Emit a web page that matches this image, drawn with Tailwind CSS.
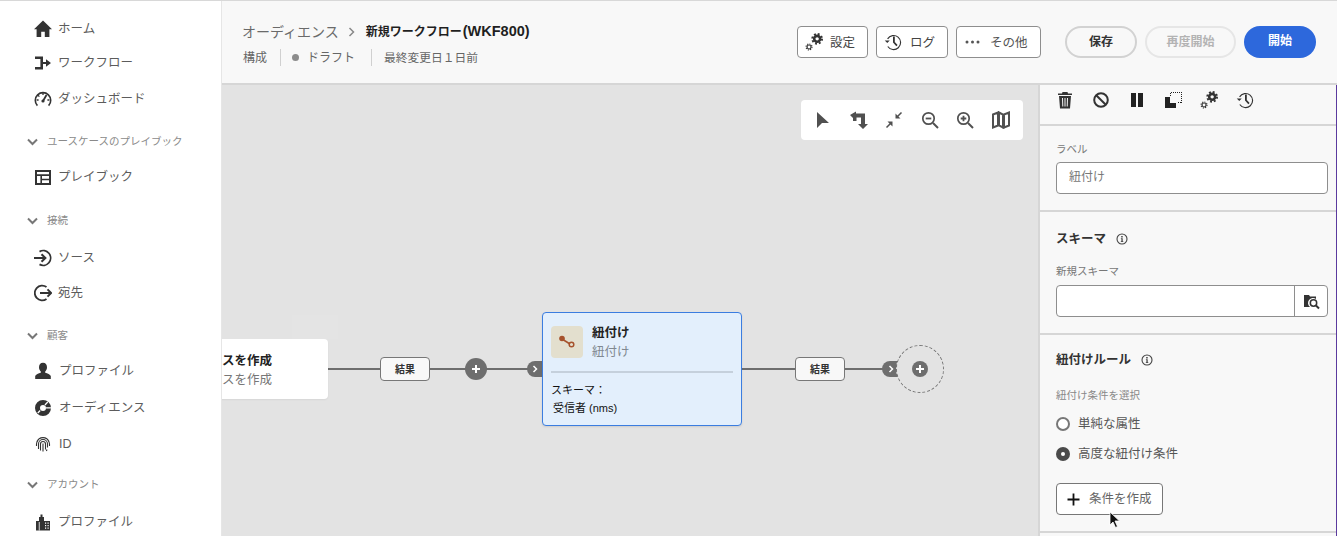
<!DOCTYPE html>
<html lang="ja">
  <head>
    <meta charset="UTF-8" />
    <title>新規ワークフロー</title>
    <script src="https://cdn.jsdelivr.net/npm/@tailwindcss/browser@4"></script>
  </head>
  <body class="h-[536px] w-[1337px] overflow-hidden bg-white font-['Liberation_Sans','Noto_Sans_CJK_JP',sans-serif] text-[#505050]">
    <!-- shared icons -->
    <svg class="hidden">
      <symbol id="gears" viewBox="0 0 20 20">
        <circle cx="13.500" cy="6.500" r="3.300" fill="none" stroke="#333" stroke-width="2.800" />
        <circle cx="13.500" cy="6.500" r="5.400" fill="none" stroke="#333" stroke-width="2.200" stroke-dasharray="2.120 2.120" />
        <circle cx="4.500" cy="15.500" r="2.200" fill="none" stroke="#333" stroke-width="1.200" />
        <circle cx="4.500" cy="15.500" r="3.300" fill="none" stroke="#333" stroke-width="1.200" stroke-dasharray="1.300 1.290" />
      </symbol>
      <symbol id="history" viewBox="0 0 20 20">
        <path d="M4 6.500A7.800 7.800 0 1 1 4.200 15" fill="none" stroke="#333" stroke-width="1.300" />
        <path d="M.8 8.200h5.600L3.600 11z" fill="#333" />
        <path d="M11 4v6.300l3.400 3.700" fill="none" stroke="#333" stroke-width="2" />
      </symbol>
      <symbol id="info" viewBox="0 0 12 12">
        <circle cx="6" cy="6" r="5" fill="none" stroke="#444" stroke-width="1.100" />
        <path d="M5.200 3h1.500v1.400H5.200zM4.900 5.200h1.800v3h.6v.9H4.800v-.9h.6V6.100h-.5z" fill="#444" />
      </symbol>
    </svg>

    <div class="flex h-full border-t border-[#d8d8d8]">
      <!-- sidebar -->
      <nav class="w-[222px] shrink-0 border-r border-[#e6e6e6] bg-white pt-[11px] text-[12.5px] text-[#5c5c5c]">
        <a class="flex h-[34px] items-center gap-[6px] pl-[34px]">
          <svg class="h-[18px] w-[18px]" viewBox="0 0 18 18"><path d="M9 .5 0 9.300h2.600V17h4.600v-5.200h3.600V17h4.600V9.300H18z" fill="#333" /></svg>
          <span>ホーム</span>
        </a>
        <a class="flex h-[34px] items-center gap-[6px] pl-[34px]">
          <svg class="h-[18px] w-[18px]" viewBox="0 0 18 18"><path d="M1 2.500h8V8h3V5.200L17 9l-5 3.800V10H9v5.500H1v-2.600h5.400V5.100H1z" fill="#333" /></svg>
          <span>ワークフロー</span>
        </a>
        <a class="mt-[2px] flex h-[34px] items-center gap-[6px] pl-[34px]">
          <svg class="h-[18px] w-[18px]" viewBox="0 0 18 18" fill="none" stroke="#333"><path d="M3.400 15.600A7.700 7.700 0 1 1 14.600 15.600" stroke-width="1.600" /><path d="M9 11 12.500 5" stroke-width="1.800" /><path d="M9 3v2M4 5.200l1.400 1.400M2.600 10h2M13.400 10h2" stroke-width="1.300" /><circle cx="9" cy="11" r="1.600" fill="#333" stroke="none" /></svg>
          <span>ダッシュボード</span>
        </a>

        <div class="mt-[16px] flex h-[20px] items-center gap-[9px] pl-[27px] text-[10.5px] text-[#8a8a8a]">
          <svg class="h-[10px] w-[11px]" viewBox="0 0 11 10"><path d="M1 2.500 5.500 7 10 2.500" fill="none" stroke="#777" stroke-width="2" /></svg>
          <span>ユースケースのプレイブック</span>
        </div>
        <a class="mt-[8px] flex h-[34px] items-center gap-[6px] pl-[34px]">
          <svg class="h-[18px] w-[18px]" viewBox="0 0 18 18"><path d="M1 2h16v15H1zm2 2v2.200h12V4zm0 4v7h3.400V8zm5 0v2.700h7V8zm0 4.300V15h7v-2.700z" fill="#333" fill-rule="evenodd" /></svg>
          <span>プレイブック</span>
        </a>

        <div class="mt-[17px] flex h-[20px] items-center gap-[9px] pl-[27px] text-[10.5px] text-[#8a8a8a]">
          <svg class="h-[10px] w-[11px]" viewBox="0 0 11 10"><path d="M1 2.500 5.500 7 10 2.500" fill="none" stroke="#777" stroke-width="2" /></svg>
          <span>接続</span>
        </div>
        <a class="mt-[10px] flex h-[34px] items-center gap-[6px] pl-[34px]">
          <svg class="h-[18px] w-[18px]" viewBox="0 0 18 18" fill="none" stroke="#333" stroke-width="1.800"><path d="M5.500 2.600A7.400 7.400 0 1 1 5.500 15.400" /><path d="M0 9h11M7.500 5.200 11.400 9l-3.900 3.800" stroke-width="2" /></svg>
          <span>ソース</span>
        </a>
        <a class="mt-px flex h-[34px] items-center gap-[6px] pl-[34px]">
          <svg class="h-[18px] w-[18px]" viewBox="0 0 18 18" fill="none" stroke="#333" stroke-width="1.800"><path d="M12.500 3A7.400 7.400 0 1 0 12.500 15" /><path d="M6 9h11M13.500 5.400 17.200 9l-3.700 3.600" stroke-width="2" /></svg>
          <span>宛先</span>
        </a>

        <div class="mt-[16px] flex h-[20px] items-center gap-[9px] pl-[27px] text-[10.5px] text-[#8a8a8a]">
          <svg class="h-[10px] w-[11px]" viewBox="0 0 11 10"><path d="M1 2.500 5.500 7 10 2.500" fill="none" stroke="#777" stroke-width="2" /></svg>
          <span>顧客</span>
        </div>
        <a class="mt-[8px] flex h-[34px] items-center gap-[7px] pl-[34px]">
          <svg class="h-[18px] w-[18px]" viewBox="0 0 18 18"><path d="M9 .8c2.600 0 4 2 4 4.400 0 2-.9 3.400-1.800 4.400v1.200c2.200.8 5.100 1.600 5.600 3.200V17H1.200v-3c.5-1.600 3.400-2.400 5.600-3.200V9.600C5.900 8.600 5 7.200 5 5.200 5 2.800 6.400.8 9 .8z" fill="#333" /></svg>
          <span>プロファイル</span>
        </a>
        <a class="mt-[3px] flex h-[34px] items-center gap-[7px] pl-[34px]">
          <svg class="h-[18px] w-[18px]" viewBox="0 0 18 18"><path d="M9 1a8 8 0 1 1 0 16A8 8 0 0 1 9 1zm0 5a3 3 0 1 0 0 6 3 3 0 0 0 0-6z" fill="#333" fill-rule="evenodd" /><path d="M12 8.200h5v1.300h-5zM10.500 5.500l2.800-3 .9.900-2.800 3zM5.800 11l-2.500 2.500.9.900 2.500-2.500z" fill="#fff" /></svg>
          <span>オーディエンス</span>
        </a>
        <a class="mt-[2px] flex h-[34px] items-center gap-[7px] pl-[34px]">
          <svg class="h-[18px] w-[18px]" viewBox="0 0 18 18" fill="none" stroke="#333" stroke-width="1.100"><path d="M3 7a6.300 6.300 0 0 1 12 0M2.500 11V9a6.500 6.500 0 0 1 13 0v2M4.500 14V9a4.500 4.500 0 0 1 9 0v3.500M6.500 15.500V9a2.500 2.500 0 0 1 5 0v5.500M9 8.500v8M13 14.500l-.6 1.500" /></svg>
          <span>ID</span>
        </a>

        <div class="mt-[14px] flex h-[20px] items-center gap-[9px] pl-[27px] text-[10.5px] text-[#8a8a8a]">
          <svg class="h-[10px] w-[11px]" viewBox="0 0 11 10"><path d="M1 2.500 5.500 7 10 2.500" fill="none" stroke="#777" stroke-width="2" /></svg>
          <span>アカウント</span>
        </div>
        <a class="mt-[10px] flex h-[34px] items-center gap-[6px] pl-[34px]">
          <svg class="h-[18px] w-[18px]" viewBox="0 0 18 18"><path d="M2 8h3V4h1.500V1.500h2V4H10v4h6v9.500H2z" fill="#333" /><path d="M11 9.500h1.200v1.200H11zm2.500 0h1.200v1.200h-1.200zM11 12h1.200v1.200H11zm2.500 0h1.200v1.200h-1.200zM11 14.500h1.200v1.200H11zm2.500 0h1.200v1.200h-1.200zM4.800 9v8.500h.8V9z" fill="#fff" /></svg>
          <span>プロファイル</span>
        </a>
      </nav>

      <div class="flex min-w-0 flex-1 flex-col">
        <!-- header -->
        <header class="flex h-[84px] shrink-0 items-start justify-between border-b-2 border-[#d6d6d6] bg-[#f8f8f8] pt-[25px] pr-[21px] pl-[20px]">
          <div class="-mt-px">
            <div class="flex h-[14px] items-center text-[14px] text-[#6a6a6a]">
              <span>オーディエンス</span>
              <svg class="mr-[10px] ml-[9px] h-[10px] w-[8px]" viewBox="0 0 8 10"><path d="M1.500 1 5.500 5l-4 4" fill="none" stroke="#888" stroke-width="1.500" /></svg>
              <span class="text-[12px] font-bold text-[#1f1f1f]">新規ワークフロー<span class="ml-px text-[14.5px]">(WKF800)</span></span>
            </div>
            <div class="mt-[10px] flex h-[17px] items-center pl-px text-[12px] text-[#666]">
              <span>構成</span>
              <span class="mr-[11px] ml-[13px] h-[17px] w-px bg-[#d0d0d0]"></span>
              <span class="mr-[8px] h-[7px] w-[7px] rounded-full bg-[#8c8c8c]"></span>
              <span>ドラフト</span>
              <span class="mr-[12px] ml-[16px] h-[17px] w-px bg-[#d0d0d0]"></span>
              <span class="text-[11.75px]">最終変更日１日前</span>
            </div>
          </div>
          <div class="flex items-center text-[12.5px]">
            <button class="flex h-[32px] w-[71px] items-center gap-[7px] rounded-[4px] border border-[#8e8e8e] bg-white pl-[7px] text-[#444]">
              <svg class="h-[18px] w-[18px]"><use href="#gears" /></svg><span class="mt-[2px]">設定</span>
            </button>
            <button class="ml-[8px] flex h-[32px] w-[72px] items-center gap-[8px] rounded-[4px] border border-[#8e8e8e] bg-white pl-[7px] text-[#444]">
              <svg class="h-[18px] w-[18px]"><use href="#history" /></svg><span class="mt-[2px]">ログ</span>
            </button>
            <button class="ml-[8px] flex h-[32px] w-[85px] items-center gap-[10px] rounded-[4px] border border-[#8e8e8e] bg-white pl-[8px] text-[#555]">
              <svg class="h-[4px] w-[15px]" viewBox="0 0 15 4"><circle cx="2" cy="2" r="1.500" fill="#555" /><circle cx="7.500" cy="2" r="1.500" fill="#555" /><circle cx="13" cy="2" r="1.500" fill="#555" /></svg><span class="mt-[2px]">その他</span>
            </button>
            <button class="ml-[24px] h-[32px] w-[72px] rounded-full border-2 border-[#d2d2d2] bg-[#f8f8f8] text-[12px] font-bold text-[#333]">保存</button>
            <button class="ml-[8px] h-[32px] w-[91px] rounded-full border-2 border-[#e6e6e6] bg-[#f8f8f8] text-[12px] font-bold text-[#b3b3b3]">再度開始</button>
            <button class="ml-[8px] h-[32px] w-[72px] rounded-full bg-[#2d68dc] pb-[2px] text-[12px] font-bold text-white">開始</button>
          </div>
        </header>

        <div class="flex min-h-0 flex-1">
          <!-- canvas: nodes sit at free positions -->
          <main class="relative flex-1 overflow-hidden bg-[#e3e3e3]">
            <div class="absolute top-[15px] left-[579px] flex h-[40px] w-[222px] items-center justify-between rounded-[4px] bg-white px-[13px]">
              <svg class="h-[18px] w-[18px]" viewBox="0 0 18 18"><path d="M3 1v16l5-5h7z" fill="#505050" /></svg>
              <svg class="h-[18px] w-[18px]" viewBox="0 0 18 18"><path d="M0 4 6 .5v2h9V13h3l-5 5-5-5h3V6.500H6.500V10H3V7z" fill="#505050" /></svg>
              <svg class="h-[18px] w-[18px]" viewBox="0 0 18 18"><path d="M16.500 1.500 11.500 6.500M1.500 16.500l5-5" stroke="#505050" stroke-width="1.500" /><path d="M10.500 2.500v5h5zM2.500 10.500h5v5z" fill="#505050" /></svg>
              <svg class="h-[18px] w-[18px]" viewBox="0 0 18 18" fill="none" stroke="#505050"><circle cx="7.500" cy="7.500" r="5.700" stroke-width="1.700" /><path d="M12 12l5 5" stroke-width="2" /><path d="M4.700 7.500h5.600" stroke-width="1.800" /></svg>
              <svg class="h-[18px] w-[18px]" viewBox="0 0 18 18" fill="none" stroke="#505050"><circle cx="7.500" cy="7.500" r="5.700" stroke-width="1.700" /><path d="M12 12l5 5" stroke-width="2" /><path d="M4.700 7.500h5.600M7.500 4.700v5.600" stroke-width="1.800" /></svg>
              <svg class="h-[18px] w-[18px]" viewBox="0 0 18 18"><path d="M1 3.500 6 1.500v13l-5 2zM7 1.500l4 2v13l-4-2zM12 3.500l5-2v13l-5 2z" fill="none" stroke="#505050" stroke-width="2" /></svg>
            </div>

            <div class="absolute top-[230px] left-[70px] h-[24px] w-[46px] bg-[#e4e4e4]"></div>
            <div class="absolute top-[283px] left-[100px] h-[2px] w-[580px] bg-[#6e6e6e]"></div>

            <div class="absolute top-[254px] left-[-40px] flex h-[60px] w-[146px] flex-col justify-center rounded-[4px] bg-white pt-[3px] pr-[56px] text-[12.5px] leading-[19px] whitespace-nowrap shadow-[0_1px_2px_rgba(0,0,0,0.06)]">
              <div class="flex justify-end font-bold text-[#222]">スを作成</div>
              <div class="flex justify-end text-[#777]">スを作成</div>
            </div>

            <div class="absolute top-[272px] left-[158px] flex h-[24px] w-[50px] items-center justify-center rounded-[4px] border border-[#777] bg-[#f8f8f8] text-[10px] font-bold text-[#333]">結果</div>
            <div class="absolute top-[273px] left-[243px] flex h-[22px] w-[22px] items-center justify-center rounded-full bg-[#6e6e6e]">
              <svg class="h-[10px] w-[10px]" viewBox="0 0 10 10"><path d="M5 1v8M1 5h8" stroke="#fff" stroke-width="2" /></svg>
            </div>
            <div class="absolute top-[276px] left-[305px] flex h-[16px] w-[22px] items-center justify-center rounded-l-full bg-[#6e6e6e] pr-[6px]">
              <svg class="h-[8px] w-[6px]" viewBox="0 0 6 8"><path d="M1.500 1 4.500 4l-3 3" fill="none" stroke="#fff" stroke-width="1.500" /></svg>
            </div>

            <!-- selected node -->
            <div class="absolute top-[227px] left-[320px] h-[114px] w-[200px] rounded-[4px] border border-[#3b7de0] bg-[#e3effc] px-[8px] pt-[13px] text-[#222] shadow-[0_1px_2px_rgba(0,0,0,0.1)]">
              <div class="flex h-[36px] gap-[9px]">
                <div class="flex h-[32px] w-[32px] items-center justify-center rounded-[4px] bg-[#e3dfce]">
                  <svg class="h-[16px] w-[18px]" viewBox="0 0 18 16"><path d="M4 5l8 5" stroke="#a6522c" stroke-width="1.500" /><circle cx="4" cy="4.500" r="2.800" fill="#a6522c" /><circle cx="13.500" cy="10.500" r="2.300" fill="#e3dfce" stroke="#a6522c" stroke-width="1.500" /></svg>
                </div>
                <div class="-mt-[2px] text-[12.5px] leading-[19px]">
                  <div class="font-bold">紐付け</div>
                  <div class="text-[#808890]">紐付け</div>
                </div>
              </div>
              <div class="mt-[9px] h-[2px] bg-[#c5d0dc]"></div>
              <div class="mt-[8px] text-[11px] leading-[18px] text-[#111]">
                <div>スキーマ：</div>
                <div class="pl-[2px]">受信者 (nms)</div>
              </div>
            </div>

            <div class="absolute top-[272px] left-[573px] flex h-[24px] w-[50px] items-center justify-center rounded-[4px] border border-[#777] bg-[#f8f8f8] text-[10px] font-bold text-[#333]">結果</div>
            <div class="absolute top-[276px] left-[660px] flex h-[16px] w-[18px] items-center justify-center rounded-l-full bg-[#6e6e6e]">
              <svg class="h-[8px] w-[6px]" viewBox="0 0 6 8"><path d="M1.500 1 4.500 4l-3 3" fill="none" stroke="#fff" stroke-width="1.500" /></svg>
            </div>
            <div class="absolute top-[260px] left-[674px] flex h-[48px] w-[48px] items-center justify-center rounded-full border border-dashed border-[#777] bg-[#e3e3e3]">
              <div class="flex h-[16px] w-[16px] items-center justify-center rounded-full bg-[#6e6e6e]">
                <svg class="h-[10px] w-[10px]" viewBox="0 0 10 10"><path d="M5 1v8M1 5h8" stroke="#fff" stroke-width="2" /></svg>
              </div>
            </div>
          </main>

          <!-- properties panel -->
          <aside class="w-[299px] shrink-0 border-r border-l-2 border-r-[#5b3a9e] border-l-[#d6d6d6] bg-[#f8f8f8]">
            <div class="flex h-[41px] items-start gap-[18px] border-b-2 border-[#d6d6d6] pt-[6px] pl-[16px]">
              <svg class="h-[18px] w-[18px]" viewBox="0 0 18 18"><path d="M6.500 1h5l.5 1.500h4V4H2V2.500h4zM3 5h12l-1 12.500H4zM6 7l.3 8.500h1L7 7zm2.500 0v8.500h1V7zM11 7l-.3 8.500h1L12 7z" fill="#333" fill-rule="evenodd" /></svg>
              <svg class="h-[18px] w-[18px]" viewBox="0 0 18 18" fill="none" stroke="#333" stroke-width="2"><circle cx="9" cy="9" r="6.800" /><path d="M4.200 4.200l9.600 9.600" /></svg>
              <svg class="h-[18px] w-[18px]" viewBox="0 0 18 18"><path d="M3 2h5v14H3zM10 2h5v14h-5z" fill="#222" /></svg>
              <svg class="h-[18px] w-[18px]" viewBox="0 0 18 18"><path d="M1 6h5v6h6v5H1z" fill="#222" /><path d="M6.500 1.500h11v10h-5" fill="none" stroke="#222" stroke-dasharray="1 1" shape-rendering="crispEdges" /><path d="M6.500 1.500v4" fill="none" stroke="#222" stroke-dasharray="1 1" shape-rendering="crispEdges" /></svg>
              <svg class="h-[18px] w-[18px]"><use href="#gears" /></svg>
              <svg class="h-[18px] w-[18px]"><use href="#history" /></svg>
            </div>

            <section class="h-[86px] border-b-2 border-[#d6d6d6] pt-[16px] pl-[16px]">
              <label class="block text-[10.500px] leading-[14px] text-[#777]">ラベル</label>
              <div class="mt-[6px] flex h-[32px] w-[272px] items-center rounded-[4px] border border-[#8e8e8e] bg-white pb-[2px] pl-[12px] text-[12px] text-[#777]">紐付け</div>
            </section>

            <section class="h-[123px] border-b-2 border-[#d6d6d6] pt-[18px] pl-[16px]">
              <h3 class="flex h-[18px] items-center gap-[10px] text-[12.5px] font-bold text-[#333]">スキーマ
                <svg class="h-[12px] w-[12px]"><use href="#info" /></svg>
              </h3>
              <label class="mt-[16px] block text-[10.500px] leading-[14px] text-[#777]">新規スキーマ</label>
              <div class="mt-[7px] flex h-[32px] w-[272px] rounded-[4px] border border-[#8e8e8e] bg-white">
                <div class="flex-1"></div>
                <div class="flex w-[33px] items-center justify-center border-l border-[#8e8e8e]">
                  <svg class="h-[17px] w-[17px]" viewBox="0 0 17 17"><path d="M1 2h5l1 1.500h6V6a5 5 0 0 0-6 8H1z" fill="#333" /><circle cx="10.500" cy="10" r="3.200" fill="none" stroke="#333" stroke-width="1.500" /><path d="M13 12.500l3 3" stroke="#333" stroke-width="2" /></svg>
                </div>
              </div>
            </section>

            <section class="border-b-2 border-[#d6d6d6] pt-[16px] pb-[16px] pl-[16px]">
              <h3 class="flex h-[18px] items-center gap-[10px] text-[12.5px] font-bold text-[#333]">紐付けルール
                <svg class="h-[12px] w-[12px]"><use href="#info" /></svg>
              </h3>
              <label class="mt-[19px] block text-[10.500px] leading-[14px] text-[#888]">紐付け条件を選択</label>
              <div class="mt-[13px] flex h-[18px] items-center gap-[8px] text-[12.5px] text-[#555]">
                <span class="h-[14px] w-[14px] rounded-full border-2 border-[#777] bg-white"></span>単純な属性
              </div>
              <div class="mt-[12px] flex h-[18px] items-center gap-[8px] text-[12.5px] text-[#555]">
                <span class="flex h-[14px] w-[14px] items-center justify-center rounded-full bg-[#4a4a4a]"><span class="h-[4px] w-[4px] rounded-full bg-white"></span></span>高度な紐付け条件
              </div>
              <button class="mt-[20px] flex h-[32px] w-[107px] items-center gap-[9px] rounded-[4px] border border-[#777] bg-white pl-[10px] text-[12.5px] text-[#666]">
                <svg class="h-[13px] w-[13px]" viewBox="0 0 13 13"><path d="M6.500 .5v12M.5 6.500h12" stroke="#111" stroke-width="1.800" /></svg>条件を作成
              </button>
            </section>
          </aside>
        </div>
      </div>
    </div>

    <!-- mouse pointer from the capture -->
    <svg class="absolute top-[511px] left-[1109px] h-[18px] w-[12px]" viewBox="0 0 12 18"><path d="M1 1v13l3-3 2.500 5.500 2-1L6 10h4.500z" fill="#111" stroke="#fff" stroke-width=".8" /></svg>
  </body>
</html>
